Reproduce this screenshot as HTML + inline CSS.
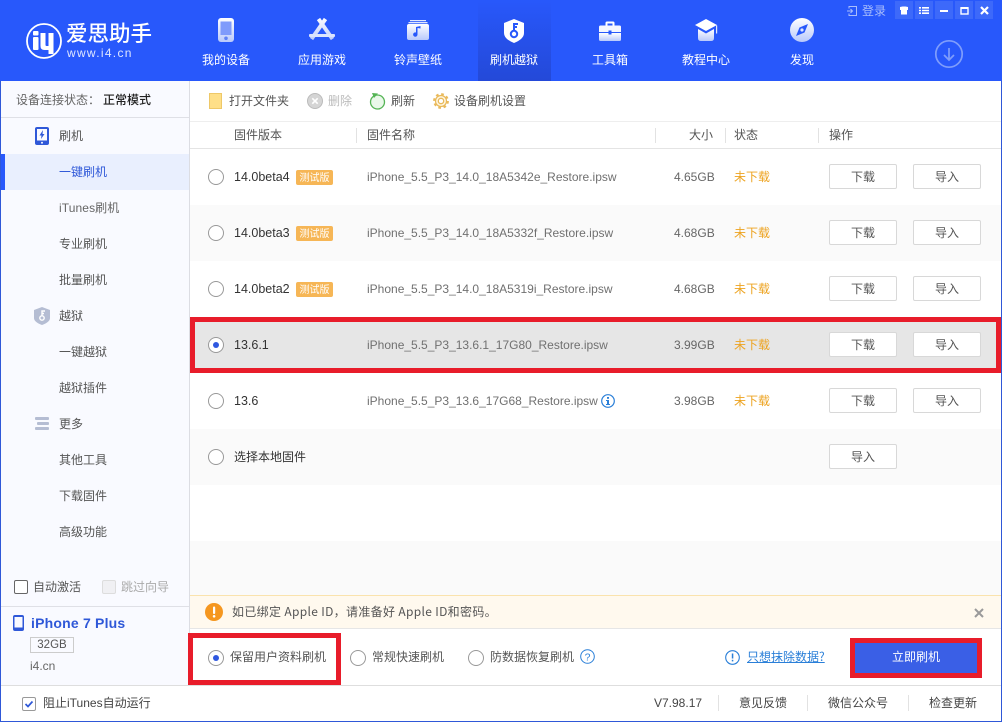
<!DOCTYPE html>
<html lang="zh"><head><meta charset="utf-8"><title>爱思助手</title>
<style>
html,body{margin:0;padding:0;background:#fff}
body{position:relative;width:1002px;height:722px;overflow:hidden;font-family:"Liberation Sans","Noto Sans CJK SC",sans-serif;font-size:12px;color:#555}
.a{position:absolute}
.t{position:absolute;white-space:nowrap;line-height:16px;height:16px;font-family:"Noto Sans CJK SC","Liberation Sans",sans-serif;font-size:12px;color:#555}
.l{position:absolute;white-space:nowrap;line-height:16px;height:16px;font-size:12px;color:#666;font-family:"Liberation Sans","Noto Sans CJK SC",sans-serif}
.f{color:#707070}
.n{position:absolute;top:52px;width:96px;text-align:center;color:#fff;line-height:16px;font-family:"Noto Sans CJK SC",sans-serif;font-size:12px}
.r{position:absolute;width:14px;height:14px;border:1px solid #999;border-radius:50%;background:#fff}
.r.on:after{content:"";position:absolute;left:4px;top:4px;width:6px;height:6px;border-radius:50%;background:#2f58e0}
.b{position:absolute;width:66px;height:23px;border:1px solid #d8d8d8;border-radius:2px;background:#fff;text-align:center;line-height:24px;color:#555;font-family:"Noto Sans CJK SC",sans-serif;font-size:12px}
.tag{position:absolute;left:296px;width:37px;height:15px;border-radius:2px;background:#f6b656;color:#fff;font-size:10px;line-height:14px;text-align:center;font-family:"Noto Sans CJK SC",sans-serif}
.w{position:absolute;top:1px;width:18px;height:18px;background:#3d69fa}
.red{position:absolute;border:5px solid #e81c2a;box-sizing:border-box}
.sep{position:absolute;width:1px;background:#e2e2e2}
svg{position:absolute;overflow:visible}
</style></head><body>
<!-- window frame -->
<div class="a" style="left:0;top:0;width:1002px;height:81px;background:#2858fb"></div>
<div class="a" style="left:478px;top:0;width:73px;height:81px;background:linear-gradient(#2858fb,#2449d8)"></div>

<!-- logo -->
<svg style="left:26px;top:23px" width="37" height="37" viewBox="0 0 37 37"><circle cx="18" cy="18" r="17" fill="none" stroke="#fff" stroke-width="1.800"/><rect x="7" y="14" width="5.500" height="13" rx="1" fill="#fff"/><rect x="7" y="8" width="5.500" height="4.500" rx="1" fill="#fff"/><path d="M14.500 10h5v12q0 1 1 1h2V10h5v21h-5v-4h-4q-4 0-4-4z" fill="#fff"/></svg>
<div class="t" style="left:66px;top:21px;height:24px;line-height:24px;font-size:21.500px;font-weight:500;color:#fff">爱思助手</div>
<div class="l" style="left:67px;top:45px;color:#dfe7ff;font-size:12px;letter-spacing:1.300px">www.i4.cn</div>

<!-- nav icons -->
<svg width="0" height="0" style="position:absolute"><defs><linearGradient id="g" x1="0" y1="0" x2="0" y2="1"><stop offset="0" stop-color="#fff"/><stop offset="1" stop-color="#b9c9fb"/></linearGradient><linearGradient id="u" gradientUnits="userSpaceOnUse" x1="0" y1="0" x2="0" y2="24"><stop offset="0" stop-color="#fff"/><stop offset="1" stop-color="#b9c9fb"/></linearGradient></defs></svg>
<svg style="left:218px;top:18px" width="16" height="24" viewBox="0 0 16 24"><rect width="16" height="24" rx="3" fill="url(#g)"/><rect x="2.500" y="3.500" width="11" height="13.500" fill="#7f9bfb"/><circle cx="8" cy="20.300" r="1.800" fill="#5f82f6"/></svg>
<svg style="left:309px;top:17px" width="26" height="24" viewBox="0 0 26 24"><path d="M9.500 2l14 20M16.500 2l-14 20" fill="none" stroke="url(#u)" stroke-width="4"/><rect x="0" y="17" width="26" height="3" rx="1" fill="#dbe4fd"/></svg>
<svg style="left:407px;top:20px" width="22" height="20" viewBox="0 0 22 20"><rect x="3" y="0" width="16" height="1.200" fill="#dfe7ff"/><rect x="1.500" y="2" width="19" height="1.300" fill="#dfe7ff"/><rect x="0" y="4" width="22" height="16" rx="2" fill="url(#g)"/><path d="M10.500 8v6.500a2.200 2.200 0 1 1-1.500-2V7l4.500-1v2.500z" fill="#2858fb"/></svg>
<svg style="left:504px;top:19px" width="20" height="24" viewBox="0 0 20 24"><path d="M10 0l10 4v10q0 6-10 10Q0 20 0 14V4z" fill="#fff"/><circle cx="10" cy="15" r="3.200" fill="none" stroke="#2858fb" stroke-width="2"/><path d="M10 12V5h4M10 8h3" fill="none" stroke="#2858fb" stroke-width="2"/></svg>
<svg style="left:599px;top:21px" width="22" height="20" viewBox="0 0 22 20"><path d="M6.500 5V2q0-1.500 1.500-1.500h6Q15.500.5 15.500 2v3h-2V2.500h-5V5z" fill="#fff"/><path d="M0 6q0-1.500 1.500-1.500h19Q22 4.500 22 6v5H0z" fill="#f4f6ff"/><path d="M0 12h22v6.500q0 1.500-1.500 1.500h-19Q0 20 0 18.500z" fill="url(#g)"/><rect x="9.500" y="9.500" width="3" height="4" fill="#2858fb"/></svg>
<svg style="left:695px;top:19px" width="23" height="22" viewBox="0 0 23 22"><path d="M11 0l11 6-11 6L0 6z" fill="#fff"/><path d="M3 10l8 4.500 8-4.500v9q0 3-3 3H6q-3 0-3-3z" fill="url(#g)"/><rect x="21" y="6.500" width="1.200" height="8" fill="#dfe7ff"/></svg>
<svg style="left:790px;top:18px" width="24" height="24" viewBox="0 0 24 24"><circle cx="12" cy="12" r="12" fill="url(#g)"/><path d="M18 6l-3.500 8.500L6 18l3.500-8.500z" fill="#2858fb"/><circle cx="12" cy="12" r="1.600" fill="#dfe7ff"/></svg>

<div class="n" style="left:178px">我的设备</div>
<div class="n" style="left:274px">应用游戏</div>
<div class="n" style="left:370px">铃声壁纸</div>
<div class="n" style="left:466px">刷机越狱</div>
<div class="n" style="left:562px">工具箱</div>
<div class="n" style="left:658px">教程中心</div>
<div class="n" style="left:754px">发现</div>

<!-- top right -->
<svg style="left:847px;top:6px" width="10" height="10" viewBox="0 0 10 10" fill="none" stroke="#a9bdfb" stroke-width="1"><path d="M2 2.500V.5h7.500v9H2v-2"/><path d="M0 5h5.500M3.500 3L5.500 5 3.500 7"/></svg>
<div class="t" style="left:862px;top:3px;color:#a9bdfb">登录</div>
<div class="w" style="left:895px"></div><div class="w" style="left:915px"></div><div class="w" style="left:935px"></div><div class="w" style="left:955px"></div><div class="w" style="left:975px"></div>
<svg style="left:895px;top:1px" width="18" height="18" viewBox="0 0 18 18"><path d="M5 6l2.500-.5h3L13 6v3h-1v4.500H6V9H5z" fill="#fff"/></svg>
<svg style="left:915px;top:1px" width="18" height="18" viewBox="0 0 18 18" fill="#fff"><path d="M4 6h2v1.600H4zM7 6h7v1.600H7zM4 8.700h2v1.600H4zM7 8.700h7v1.600H7zM4 11.400h2V13H4zM7 11.400h7V13H7z"/></svg>
<svg style="left:935px;top:1px" width="18" height="18" viewBox="0 0 18 18"><rect x="5" y="9" width="8" height="2" fill="#fff"/></svg>
<svg style="left:955px;top:1px" width="18" height="18" viewBox="0 0 18 18"><rect x="6" y="7" width="7" height="6" fill="none" stroke="#fff" stroke-width="1.400"/><rect x="5.500" y="6" width="8" height="2" fill="#fff"/></svg>
<svg style="left:975px;top:1px" width="18" height="18" viewBox="0 0 18 18"><path d="M6 6l7 7M13 6l-7 7" stroke="#fff" stroke-width="2.200"/></svg>
<svg style="left:935px;top:40px" width="28" height="28" viewBox="0 0 28 28" fill="none" stroke="#7f9dfb" stroke-width="1.700"><circle cx="14" cy="14" r="13.200"/><path d="M14 8v12M9 15l5 5 5-5"/></svg>

<!-- sidebar -->
<div class="a" style="left:1px;top:81px;width:188px;height:604px;background:#f9faff"></div>
<div class="a" style="left:189px;top:81px;width:1px;height:604px;background:#dcdde3"></div>
<div class="a" style="left:1px;top:117px;width:188px;height:1px;background:#dfe0e6"></div>
<div class="t" style="left:16px;top:92px;color:#666">设备连接状态：</div>
<div class="t" style="left:103px;top:92px;color:#222;font-weight:500">正常模式</div>
<div class="a" style="left:1px;top:154px;width:188px;height:36px;background:#e9effe"></div>
<div class="a" style="left:0;top:154px;width:5px;height:36px;background:#2858fb"></div>
<svg style="left:35px;top:127px" width="14" height="18" viewBox="0 0 14 18"><rect width="14" height="18" rx="2" fill="#2f58d8"/><rect x="2" y="2" width="10" height="11.500" fill="#f9faff"/><path d="M8 3L4.500 8.500h2L6 12l3.500-5h-2z" fill="#2f58d8"/><circle cx="7" cy="15.700" r="1" fill="#f9faff"/></svg>
<svg style="left:34px;top:307px" width="16" height="18" viewBox="0 0 16 18"><path d="M8 0l8 3v8q0 4-8 7-8-3-8-7V3z" fill="#b5bdd3"/><circle cx="8" cy="11" r="2.200" fill="none" stroke="#fff" stroke-width="1.400"/><path d="M8 9V4h3M8 6.500h2" fill="none" stroke="#fff" stroke-width="1.400"/></svg>
<svg style="left:35px;top:417px" width="14" height="13" viewBox="0 0 14 13" fill="#b5bdd3"><rect width="14" height="3" rx="1"/><rect x="2" y="5" width="12" height="3" rx="1"/><rect y="10" width="14" height="3" rx="1"/></svg>
<div class="t" style="left:59px;top:128px">刷机</div>
<div class="t" style="left:59px;top:164px;color:#2f58d8">一键刷机</div>
<div class="l" style="left:59px;top:200px;letter-spacing:.1px">iTunes刷机</div>
<div class="t" style="left:59px;top:236px">专业刷机</div>
<div class="t" style="left:59px;top:272px">批量刷机</div>
<div class="t" style="left:59px;top:308px">越狱</div>
<div class="t" style="left:59px;top:344px">一键越狱</div>
<div class="t" style="left:59px;top:380px">越狱插件</div>
<div class="t" style="left:59px;top:416px">更多</div>
<div class="t" style="left:59px;top:452px">其他工具</div>
<div class="t" style="left:59px;top:488px">下载固件</div>
<div class="t" style="left:59px;top:524px">高级功能</div>

<div class="a" style="left:14px;top:580px;width:12px;height:12px;border:1px solid #666;border-radius:2px;background:#fff"></div>
<div class="t" style="left:33px;top:579px">自动激活</div>
<div class="a" style="left:102px;top:580px;width:12px;height:12px;border:1px solid #ddd;border-radius:2px;background:#f0f0f3"></div>
<div class="t" style="left:121px;top:579px;color:#aaa">跳过向导</div>
<div class="a" style="left:1px;top:606px;width:188px;height:1px;background:#dfe0e6"></div>
<svg style="left:13px;top:615px" width="11" height="16" viewBox="0 0 11 16"><rect width="11" height="16" rx="2" fill="#2f58d8"/><rect x="1.500" y="2" width="8" height="10.500" fill="#f9faff"/></svg>
<div class="l" style="left:31px;top:615px;font-size:14px;font-weight:700;color:#2f58d8;letter-spacing:.2px">iPhone 7 Plus</div>
<div class="a" style="left:30px;top:637px;width:42px;height:14px;border:1px solid #ccc;text-align:center;line-height:14px;font-size:11.500px;color:#555">32GB</div>
<div class="l" style="left:30px;top:658px">i4.cn</div>

<!-- toolbar -->
<div class="a" style="left:209px;top:93px;width:11px;height:14px;background:#fedf88;border:1px solid #eec868"></div>
<div class="t" style="left:229px;top:93px">打开文件夹</div>
<svg style="left:307px;top:93px" width="16" height="16" viewBox="0 0 16 16"><circle cx="8" cy="8" r="7.500" fill="#d5d5d5" stroke="#bbb"/><path d="M5.300 5.300l5.400 5.400M10.700 5.300l-5.400 5.400" stroke="#fff" stroke-width="1.600"/></svg>
<div class="t" style="left:328px;top:93px;color:#bbb">删除</div>
<svg style="left:369px;top:92px" width="17" height="18" viewBox="0 0 17 18"><circle cx="8.500" cy="10" r="7" fill="#eaf8ea" stroke="#55b455" stroke-width="1.300"/><path d="M3 1l6 .5L5 6z" fill="#55b455"/></svg>
<div class="t" style="left:391px;top:93px">刷新</div>
<svg style="left:433px;top:93px" width="16" height="16" viewBox="0 0 16 16"><circle cx="8" cy="8" r="6.700" fill="none" stroke="#e9b95a" stroke-width="2.400" stroke-dasharray="2.600 2.660"/><circle cx="8" cy="8" r="5.500" fill="#fff6df" stroke="#e9b95a" stroke-width="1.200"/><circle cx="8" cy="8" r="2.700" fill="#fff" stroke="#e9b95a" stroke-width="1.300"/></svg>
<div class="t" style="left:454px;top:93px">设备刷机设置</div>
<div class="a" style="left:190px;top:121px;width:811px;height:1px;background:#eee"></div>

<!-- table head -->
<div class="t" style="left:234px;top:127px">固件版本</div>
<div class="sep" style="left:356px;top:128px;height:15px"></div>
<div class="t" style="left:367px;top:127px">固件名称</div>
<div class="sep" style="left:655px;top:128px;height:15px"></div>
<div class="t" style="left:689px;top:127px">大小</div>
<div class="sep" style="left:725px;top:128px;height:15px"></div>
<div class="t" style="left:734px;top:127px">状态</div>
<div class="sep" style="left:818px;top:128px;height:15px"></div>
<div class="t" style="left:829px;top:127px">操作</div>
<div class="a" style="left:190px;top:148px;width:811px;height:1px;background:#e4e4e4"></div>

<!-- rows -->
<div class="a" style="left:190px;top:205px;width:811px;height:56px;background:#fafafa"></div>
<div class="a" style="left:190px;top:317px;width:811px;height:56px;background:#e6e6e6"></div>
<div class="a" style="left:190px;top:429px;width:811px;height:56px;background:#fafafa"></div>
<div class="a" style="left:190px;top:541px;width:811px;height:54px;background:#fafafa"></div>

<div class="r" style="left:208px;top:169px"></div>
<div class="l" style="left:234px;top:169px;color:#333;font-size:12.500px">14.0beta4</div><div class="tag" style="top:170px">测试版</div>
<div class="l f" style="left:367px;top:169px">iPhone_5.5_P3_14.0_18A5342e_Restore.ipsw</div>
<div class="l" style="left:674px;top:169px">4.65GB</div><div class="t" style="left:734px;top:169px;color:#eda320">未下载</div>
<div class="b" style="left:829px;top:164px">下载</div><div class="b" style="left:913px;top:164px">导入</div>

<div class="r" style="left:208px;top:225px"></div>
<div class="l" style="left:234px;top:225px;color:#333;font-size:12.500px">14.0beta3</div><div class="tag" style="top:226px">测试版</div>
<div class="l f" style="left:367px;top:225px">iPhone_5.5_P3_14.0_18A5332f_Restore.ipsw</div>
<div class="l" style="left:674px;top:225px">4.68GB</div><div class="t" style="left:734px;top:225px;color:#eda320">未下载</div>
<div class="b" style="left:829px;top:220px">下载</div><div class="b" style="left:913px;top:220px">导入</div>

<div class="r" style="left:208px;top:281px"></div>
<div class="l" style="left:234px;top:281px;color:#333;font-size:12.500px">14.0beta2</div><div class="tag" style="top:282px">测试版</div>
<div class="l f" style="left:367px;top:281px">iPhone_5.5_P3_14.0_18A5319i_Restore.ipsw</div>
<div class="l" style="left:674px;top:281px">4.68GB</div><div class="t" style="left:734px;top:281px;color:#eda320">未下载</div>
<div class="b" style="left:829px;top:276px">下载</div><div class="b" style="left:913px;top:276px">导入</div>

<div class="r on" style="left:208px;top:337px"></div>
<div class="l" style="left:234px;top:337px;color:#333;font-size:12.500px">13.6.1</div>
<div class="l f" style="left:367px;top:337px">iPhone_5.5_P3_13.6.1_17G80_Restore.ipsw</div>
<div class="l" style="left:674px;top:337px">3.99GB</div><div class="t" style="left:734px;top:337px;color:#eda320">未下载</div>
<div class="b" style="left:829px;top:332px">下载</div><div class="b" style="left:913px;top:332px">导入</div>

<div class="r" style="left:208px;top:393px"></div>
<div class="l" style="left:234px;top:393px;color:#333;font-size:12.500px">13.6</div>
<div class="l f" style="left:367px;top:393px">iPhone_5.5_P3_13.6_17G68_Restore.ipsw</div>
<svg style="left:601px;top:394px" width="14" height="14" viewBox="0 0 14 14"><circle cx="7" cy="7" r="6.300" fill="none" stroke="#2a7fd8" stroke-width="1.200"/><rect x="6" y="3" width="2" height="1.800" fill="#2a7fd8"/><path d="M5 6h3v4h1v1H5v-1h1V7H5z" fill="#2a7fd8"/></svg>
<div class="l" style="left:674px;top:393px">3.98GB</div><div class="t" style="left:734px;top:393px;color:#eda320">未下载</div>
<div class="b" style="left:829px;top:388px">下载</div><div class="b" style="left:913px;top:388px">导入</div>

<div class="r" style="left:208px;top:449px"></div>
<div class="t" style="left:234px;top:449px;color:#333">选择本地固件</div>
<div class="b" style="left:829px;top:444px">导入</div>

<!-- notice -->
<div class="a" style="left:190px;top:595px;width:811px;height:33px;background:#fff9ee;border-top:1px solid #fae3ad;box-sizing:border-box"></div>
<div class="a" style="left:190px;top:628px;width:811px;height:1px;background:#e6e6e6"></div>
<svg style="left:205px;top:603px" width="18" height="18" viewBox="0 0 18 18"><circle cx="9" cy="9" r="9" fill="#f5971f"/><rect x="8" y="3.500" width="2.200" height="7.500" rx="1" fill="#fff"/><circle cx="9.100" cy="13.300" r="1.300" fill="#fff"/></svg>
<div class="t" style="left:232px;top:604px;letter-spacing:.33px">如已绑定 Apple ID，请准备好 Apple ID和密码。</div>
<svg style="left:974px;top:608px" width="10" height="10" viewBox="0 0 10 10"><path d="M1 1l8 8M9 1l-8 8" stroke="#9a9a9a" stroke-width="2"/></svg>

<!-- radios -->
<div class="r on" style="left:208px;top:650px"></div>
<div class="t" style="left:230px;top:649px">保留用户资料刷机</div>
<div class="r" style="left:350px;top:650px"></div>
<div class="t" style="left:372px;top:649px">常规快速刷机</div>
<div class="r" style="left:468px;top:650px"></div>
<div class="t" style="left:490px;top:649px">防数据恢复刷机</div>
<svg style="left:580px;top:649px" width="15" height="15" viewBox="0 0 15 15"><circle cx="7.500" cy="7.500" r="6.800" fill="none" stroke="#2a7fd8" stroke-width="1"/><text x="7.500" y="11.300" text-anchor="middle" font-size="10.500" fill="#2a7fd8" font-family="Liberation Sans">?</text></svg>
<svg style="left:725px;top:650px" width="15" height="15" viewBox="0 0 15 15"><circle cx="7.500" cy="7.500" r="6.800" fill="none" stroke="#2a7fd8" stroke-width="1.100"/><rect x="6.800" y="3.500" width="1.500" height="5" fill="#2a7fd8"/><rect x="6.800" y="9.800" width="1.500" height="1.600" fill="#2a7fd8"/></svg>
<div class="t" style="left:747px;top:649px;color:#2a7fd8;text-decoration:underline">只想抹除数据?</div>
<div class="a" style="left:851px;top:638px;width:131px;height:40px;background:#3a5fe6"></div>
<div class="t" style="left:892px;top:649px;color:#fff">立即刷机</div>

<!-- footer -->
<div class="a" style="left:1px;top:685px;width:1000px;height:1px;background:#dedede"></div>
<div class="a" style="left:22px;top:697px;width:12px;height:12px;border:1px solid #999;border-radius:2px;background:#fff"></div>
<svg style="left:22px;top:697px" width="14" height="14" viewBox="0 0 14 14"><path d="M3.500 7l2.500 2.500 4.500-5" fill="none" stroke="#2f58d8" stroke-width="1.700"/></svg>
<div class="l" style="left:43px;top:695px;color:#444">阻止iTunes自动运行</div>
<div class="l" style="left:654px;top:695px;color:#444">V7.98.17</div>
<div class="sep" style="left:718px;top:695px;height:16px"></div>
<div class="t" style="left:739px;top:695px;color:#444">意见反馈</div>
<div class="sep" style="left:807px;top:695px;height:16px"></div>
<div class="t" style="left:828px;top:695px;color:#444">微信公众号</div>
<div class="sep" style="left:908px;top:695px;height:16px"></div>
<div class="t" style="left:929px;top:695px;color:#444">检查更新</div>

<!-- red highlights -->
<div class="red" style="left:190px;top:317px;width:811px;height:56px"></div>
<div class="red" style="left:188px;top:633px;width:153px;height:52px"></div>
<div class="red" style="left:850px;top:638px;width:132px;height:40px"></div>

<!-- window border -->
<div class="a" style="left:0;top:81px;width:1px;height:641px;background:#2f58d8"></div>
<div class="a" style="left:1001px;top:81px;width:1px;height:641px;background:#2f58d8"></div>
<div class="a" style="left:0;top:721px;width:1002px;height:1px;background:#2f58d8"></div>
</body></html>
